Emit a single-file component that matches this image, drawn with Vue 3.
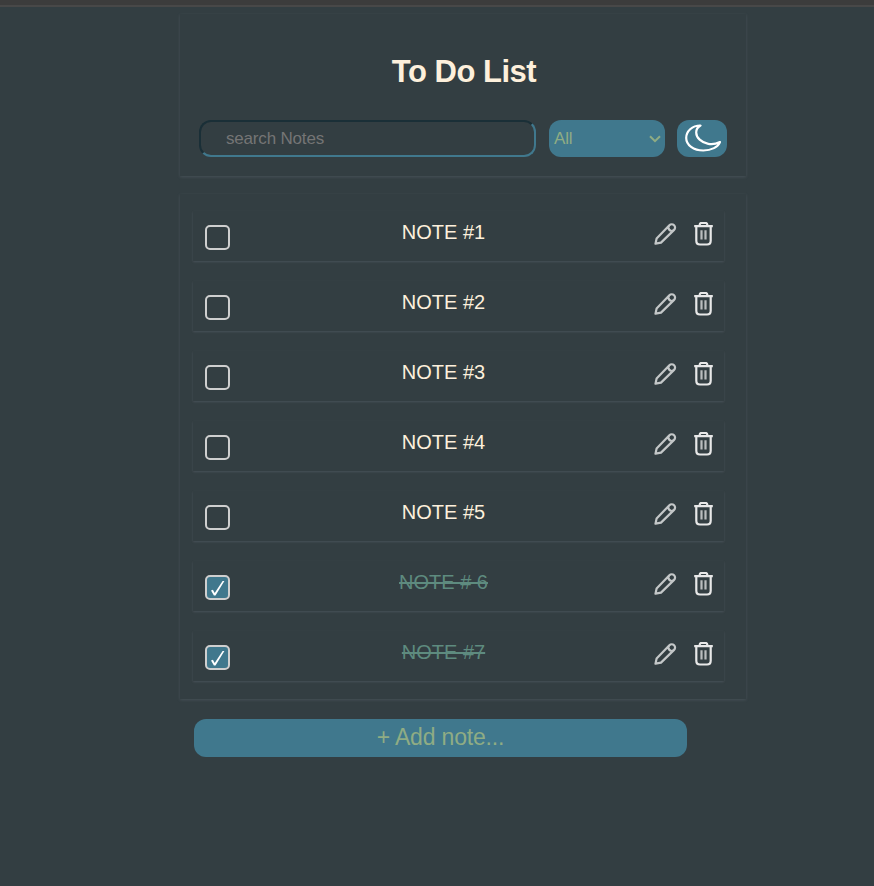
<script setup>
import { ref, computed } from 'vue'

const query = ref('')
const filter = ref('All')
const notes = ref([
  { id: 1, text: 'NOTE #1', done: false },
  { id: 2, text: 'NOTE #2', done: false },
  { id: 3, text: 'NOTE #3', done: false },
  { id: 4, text: 'NOTE #4', done: false },
  { id: 5, text: 'NOTE #5', done: false },
  { id: 6, text: 'NOTE # 6', done: true },
  { id: 7, text: 'NOTE #7', done: true },
])
const visible = computed(() =>
  notes.value.filter(
    (n) =>
      n.text.toLowerCase().includes(query.value.toLowerCase()) &&
      (filter.value === 'All' || n.done === (filter.value === 'Complete')),
  ),
)
function remove(id) {
  notes.value = notes.value.filter((n) => n.id !== id)
}
</script>

<template>
  <div class="page">
    <div class="topbar"></div>
    <header class="panel head">
      <h1>To Do List</h1>
      <div class="tools">
        <input v-model="query" class="search" type="text" placeholder="search Notes" />
        <div class="select-wrap">
          <select v-model="filter" class="select">
            <option>All</option>
            <option>Complete</option>
            <option>Incomplete</option>
          </select>
          <svg class="chevron" viewBox="0 0 12 8"><path d="M1 1.2 6 6.2 11 1.2" /></svg>
        </div>
        <button class="theme" aria-label="theme">
          <svg viewBox="0 0 36 28">
            <path d="M15.500 1.500C7 1.500 1.200 7.300 1.200 14C1.200 21 8.500 26.500 18.300 26.500C26.500 26.500 33 23 35 18.100C31.500 19.800 27 20.600 23.300 19.900C16.500 18.600 11.200 13.700 11.200 8.400C11.200 5.400 13 2.900 15.500 1.500Z" />
          </svg>
        </button>
      </div>
    </header>

    <ul class="panel list">
      <li v-for="n in visible" :key="n.id" class="note" :class="{ done: n.done }">
        <button class="check" aria-label="toggle" @click="n.done = !n.done">
          <svg v-if="n.done" viewBox="0 0 21 21"><path d="M4 13.500 5.900 12.700 7.700 16 15.600 4 17.400 4 8.500 18.600 6.900 18.600Z" /></svg>
        </button>
        <span class="text">{{ n.text }}</span>
        <button class="icon" aria-label="edit">
          <svg class="pencil" viewBox="0 0 24 24">
            <path d="M2.500 21.700 3.600 16.500 16.400 3.200A3.300 3.300 0 0 1 21.100 7.900L8 20.600ZM16.400 3.200A3.300 3.300 0 0 0 21.100 7.900" />
          </svg>
        </button>
        <button class="icon" aria-label="delete" @click="remove(n.id)">
          <svg class="trash" viewBox="0 0 20 24">
            <path d="M1.200 4.200H19.800M6.700 3.900V2.700Q6.700 1 8.400 1H12.600Q14.300 1 14.300 2.700V3.900M3.300 4.200V18.700Q3.300 22.500 7 22.500H14Q17.700 22.500 17.700 18.700V4.200" />
            <path class="bars" d="M8.500 8.200V17.500M12.500 8.200V17.500" />
          </svg>
        </button>
      </li>
    </ul>
    <button class="add">+ Add note...</button>
  </div>
</template>

<style>
body {
  background: #333e42;
}
</style>

<style scoped>
.page {
  box-sizing: border-box;
  height: 886px;
  overflow: hidden;
  color: #fdf0dc;
  background: #333e42;
  font-family: "Liberation Sans", Arial, sans-serif;
}
.topbar {
  box-sizing: border-box;
  height: 7px;
  background: #3c3c3c;
  border-bottom: 2px solid #484848;
}
.panel {
  box-sizing: border-box;
  width: 566px;
  margin-left: 180px;
  box-shadow: 0 1px 3px rgba(165, 170, 190, 0.18);
}
.head {
  height: 162px;
  margin-top: 7px;
  padding: 40px 19px 0;
}
h1 {
  margin: 0;
  padding-left: 2px;
  font-size: 31px;
  line-height: 36px;
  letter-spacing: -0.480px;
  text-align: center;
}
.tools {
  display: flex;
  margin-top: 30px;
}
.search {
  box-sizing: border-box;
  width: 337px;
  height: 37px;
  margin-right: 13px;
  padding: 0 25px;
  border: 2px solid;
  border-color: #1a2f37 #40788d #40788d #1a2f37;
  border-radius: 12px;
  background: transparent;
  color: #fdf0dc;
  font: 17px "Liberation Sans", Arial, sans-serif;
  letter-spacing: -0.180px;
  outline: none;
}
.search::placeholder {
  color: #757575;
}
.select-wrap {
  position: relative;
  width: 116px;
  margin-right: 12px;
}
.select {
  appearance: none;
  width: 100%;
  height: 37px;
  padding: 0 5px;
  border: 0;
  border-radius: 12px;
  background: #40788d;
  color: #8fac84;
  font: 17px "Liberation Sans", Arial, sans-serif;
  letter-spacing: -0.180px;
}
.chevron {
  position: absolute;
  top: 15px;
  right: 4px;
  width: 12px;
  height: 8px;
  fill: none;
  stroke: #8fac84;
  stroke-width: 2;
  pointer-events: none;
}
.theme {
  width: 50px;
  height: 37px;
  padding: 4px 6px 5px 8px;
  border: 0;
  border-radius: 12px;
  background: #40788d;
}
.theme svg {
  display: block;
  width: 36px;
  height: 28px;
  fill: none;
  stroke: #fff;
  stroke-width: 2.2;
  stroke-linejoin: round;
}
.list {
  display: flex;
  flex-direction: column;
  gap: 20px;
  height: 505px;
  margin-top: 18px;
  margin-bottom: 0;
  padding: 17px 22px 0 13px;
  list-style: none;
}
.note {
  display: flex;
  box-sizing: border-box;
  height: 50px;
  padding: 0 11px 0 12px;
  box-shadow: 0 1px 2px rgba(165, 170, 190, 0.18);
}
.check {
  box-sizing: border-box;
  width: 25px;
  height: 25px;
  margin-top: 14px;
  padding: 0;
  border: 2px solid #cfcfcf;
  border-radius: 5px;
  background: transparent;
}
.check svg {
  display: block;
  width: 21px;
  height: 21px;
  fill: #fff;
}
.done .check {
  background: #40788d;
}
.text {
  flex: 1;
  padding: 9px 0 0 4px;
  font-size: 20px;
  line-height: 24px;
  text-align: center;
}
.done .text {
  color: #5e8b7f;
  text-decoration: line-through;
}
.icon {
  height: 24px;
  margin-top: 11px;
  padding: 0;
  border: 0;
  background: transparent;
}
.icon svg {
  display: block;
  fill: none;
  stroke: #e8e8e8;
  stroke-width: 2.2;
  stroke-linejoin: round;
}
.icon .pencil {
  width: 24px;
  height: 24px;
  margin-right: 16px;
  stroke: #c4c7c8;
}
.icon .trash {
  width: 20px;
  height: 24px;
}
.trash .bars {
  stroke: #b9bdbf;
}
.add {
  display: block;
  width: 493px;
  height: 38px;
  margin: 20px 0 0 194px;
  padding: 0 0 2px;
  border: 0;
  border-radius: 12px;
  background: #40788d;
  color: #8fac84;
  font: 23px "Liberation Sans", Arial, sans-serif;
  letter-spacing: -0.180px;
}
</style>
